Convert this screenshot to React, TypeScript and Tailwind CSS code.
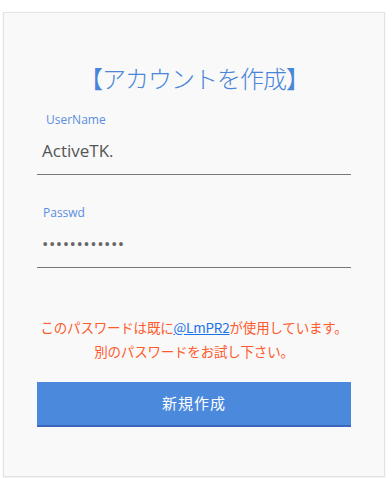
export default function App() {
  return (
    <div className="min-h-screen bg-white pt-3 pl-[3px] pr-[7px] font-['Noto_Sans_CJK_JP','Noto_Sans',sans-serif]">
      <div className="flex h-[465px] w-[382px] flex-col border border-[#e3e3e3] bg-[#f9f9f9] px-[33px] shadow-[0_1px_2px_rgba(0,0,0,0.08)]">
        <h1 className="mt-[47px] text-center text-[24px] font-light leading-[36px] tracking-[-1px] text-[#4a86d8]">
          【アカウントを作成】
        </h1>

        <div className="mt-[16px]">
          <label className="block pl-[9px] font-['Open_Sans',sans-serif] text-[12px] leading-[16px] text-[#5a8ee0]">
            UserName
          </label>
          <div className="flex h-[47px] items-center border-b border-[#777] pl-[5px] font-['Open_Sans',sans-serif] text-[17px] text-[#555]">
            ActiveTK.
          </div>
        </div>

        <div className="mt-[30px]">
          <label className="block pl-[6px] font-['Open_Sans',sans-serif] text-[12px] leading-[16px] text-[#5a8ee0]">
            Passwd
          </label>
          <div className="flex h-[47px] items-center border-b border-[#777] pl-[5px] font-['Open_Sans',sans-serif] text-[17px] tracking-[0.5px] text-[#666]">
            ••••••••••••
          </div>
        </div>

        <p className="mt-[47px] -mx-[10px] whitespace-nowrap text-center text-[13.5px] leading-[24px] tracking-[-0.2px] text-[#ff5a2d]">
          このパスワードは既に
          <a href="#" className="text-[#1a73e8] underline">
            @LmPR2
          </a>
          が使用しています。
          <br />
          別のパスワードをお試し下さい。
        </p>

        <button className="mt-[19px] h-[45px] w-full border-b-2 border-[#3a66bd] bg-[#4a89dc] text-[15px] tracking-[1px] text-white">
          新規作成
        </button>
      </div>
    </div>
  );
}
